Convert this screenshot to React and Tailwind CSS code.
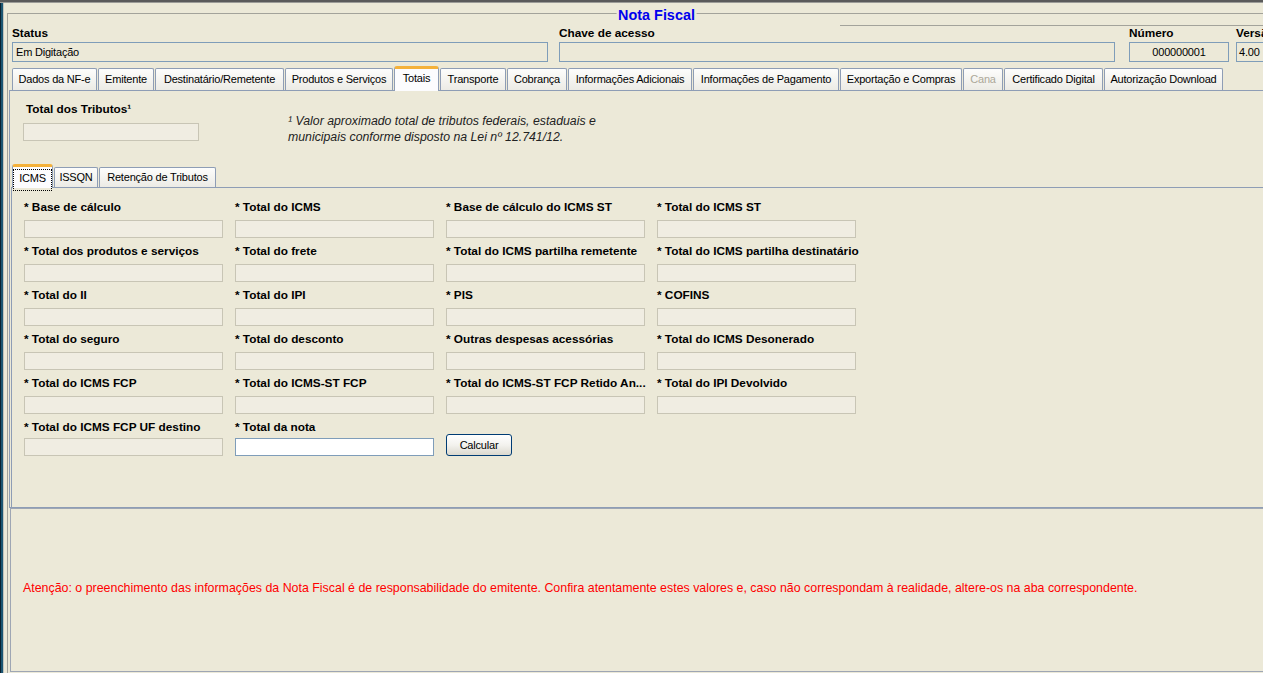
const tabs = [
  { t: "Dados da NF-e", w: "w-[85px]" },
  { t: "Emitente", w: "w-[56px]" },
  { t: "Destinatário/Remetente", w: "w-[129px]" },
  { t: "Produtos e Serviços", w: "w-[108px]" },
  { t: "Totais", w: "w-[45px]", sel: true },
  { t: "Transporte", w: "w-[66px]" },
  { t: "Cobrança", w: "w-[60px]" },
  { t: "Informações Adicionais", w: "w-[124px]" },
  { t: "Informações de Pagamento", w: "w-[146px]" },
  { t: "Exportação e Compras", w: "w-[122px]" },
  { t: "Cana", w: "w-[40px]", dis: true },
  { t: "Certificado Digital", w: "w-[99px]" },
  { t: "Autorização Download", w: "w-[119px]" },
];

const rows = [
  ["* Base de cálculo", "* Total do ICMS", "* Base de cálculo do ICMS ST", "* Total do ICMS ST"],
  ["* Total dos produtos e serviços", "* Total do frete", "* Total do ICMS partilha remetente", "* Total do ICMS partilha destinatário"],
  ["* Total do II", "* Total do IPI", "* PIS", "* COFINS"],
  ["* Total do seguro", "* Total do desconto", "* Outras despesas acessórias", "* Total do ICMS Desonerado"],
  ["* Total do ICMS FCP", "* Total do ICMS-ST FCP", "* Total do ICMS-ST FCP Retido An...", "* Total do IPI Devolvido"],
];

function Tab({ t, w, sel, dis }) {
  if (sel) {
    return (
      <div className={`${w} h-[25px] -mb-[1px] relative z-10 bg-[#fcfcfe] border-x border-t-[3px] border-x-[#8e9db5] border-t-[#f4b13a] rounded-t-[3px] flex items-center justify-center pb-[3px] text-[11px] tracking-[-0.2px] whitespace-nowrap`}>
        {t}
      </div>
    );
  }
  return (
    <div className={`${w} h-[22px] border-x border-t border-[#8e9db5] rounded-t-[2px] bg-linear-to-b from-[#fdfdfc] to-[#ecebe5] flex items-center justify-center text-[11px] tracking-[-0.2px] whitespace-nowrap ${dis ? "text-[#aca899]" : "text-black"}`}>
      {t}
    </div>
  );
}

function Label({ children }) {
  return <div className="h-[14px] leading-[14px] text-[11.8px] font-bold whitespace-nowrap">{children}</div>;
}

function DisabledInput({ last }) {
  return <div className={`${last ? "mt-[4px]" : "mt-[6px]"} h-[18px] w-[199px] border border-[#c8c5b5] bg-[#f0ede2]`} />;
}

export default function App() {
  return (
    <div className="w-[1263px] h-[673px] overflow-hidden bg-[#ece9d8] flex flex-col font-['Liberation_Sans',Arial,sans-serif] text-black">
      <div className="h-[2px] bg-[#5b5b5b] shrink-0" />
      <div className="h-[1px] bg-[#9c9c98] shrink-0" />
      <div className="flex flex-1 min-h-0">
        <div className="w-[1px] bg-[#0b2231] shrink-0" />
        <div className="w-[2px] bg-[#1c5672] shrink-0" />
        <div className="w-[1px] bg-[#c4c3bb] shrink-0" />
        <div className="ml-[3px] mt-[10px] w-[1298px] shrink-0 relative border-t border-l border-[#a3a39b] flex flex-col">
          <span className="absolute left-1/2 -translate-x-1/2 -top-[7px] bg-[#ece9d8] px-[2px] text-[14.4px] leading-[16px] font-bold text-[#0000ee]">
            Nota Fiscal
          </span>

          <div className="h-[12px] flex">
            <div className="ml-[832px] flex-1 border-b border-[#a3a39b]" />
          </div>

          {/* header fields */}
          <div className="flex pl-[4px]">
            <div className="w-[536px]">
              <Label>Status</Label>
              <div className="mt-[2px] h-[20px] border border-[#7f9db9] bg-[#ece9d8] px-[3px] flex items-center text-[11px] tracking-[-0.2px]">Em Digitação</div>
            </div>
            <div className="w-[556px] ml-[11px]">
              <Label>Chave de acesso</Label>
              <div className="mt-[2px] h-[20px] border border-[#7f9db9] bg-[#ece9d8]" />
            </div>
            <div className="w-[100px] ml-[14px]">
              <Label>Número</Label>
              <div className="mt-[2px] h-[20px] border border-[#7f9db9] bg-[#ece9d8] flex items-center justify-center text-[11px] tracking-[-0.2px]">000000001</div>
            </div>
            <div className="w-[60px] ml-[7px]">
              <Label>Versão</Label>
              <div className="mt-[2px] h-[20px] border border-[#7f9db9] bg-[#ece9d8] px-[2px] flex items-center text-[11px] tracking-[-0.2px]">4.00</div>
            </div>
          </div>

          {/* main tabs */}
          <div className="mt-[4px] h-[24px] flex items-end gap-[1px] pl-[4px]">
            {tabs.map((tb) => (
              <Tab key={tb.t} {...tb} />
            ))}
          </div>

          {/* tab panel */}
          <div className="ml-[1px] h-[418px] border-t border-l border-b border-[#8e9db5] flex flex-col">
            <div className="pt-[11px] pl-[13px] flex">
              <div className="w-[176px]">
                <div className="ml-[3px]">
                  <Label>Total dos Tributos¹</Label>
                </div>
                <div className="mt-[7px] h-[18px] w-[176px] border border-[#c8c5b5] bg-[#f0ede2]" />
              </div>
              <div className="ml-[89px] mt-[11px] text-[12.3px] leading-[16px] italic text-[#222]">
                <div>¹ Valor aproximado total de tributos federais, estaduais e</div>
                <div>municipais conforme disposto na Lei nº 12.741/12.</div>
              </div>
            </div>

            {/* sub tabs */}
            <div className="mt-[19px] ml-[2px] h-[23px] flex items-end gap-[1px]">
              <div className="w-[41px] h-[24px] -mb-[1px] relative z-10 bg-[#fcfcfe] border-x border-t-[3px] border-x-[#8e9db5] border-t-[#f4b13a] rounded-t-[3px] flex flex-col">
                <div className="flex-1 mt-[2px] mb-[1px] border border-dotted border-black flex items-center justify-center pb-[3px] text-[11px] tracking-[-0.2px]">
                  ICMS
                </div>
              </div>
              <div className="w-[44px] h-[20px] border-x border-t border-[#8e9db5] rounded-t-[2px] bg-linear-to-b from-[#fdfdfc] to-[#ecebe5] flex items-center justify-center text-[11px] tracking-[-0.2px]">
                ISSQN
              </div>
              <div className="w-[117px] h-[20px] border-x border-t border-[#8e9db5] rounded-t-[2px] bg-linear-to-b from-[#fdfdfc] to-[#ecebe5] flex items-center justify-center text-[11px] tracking-[-0.2px] whitespace-nowrap">
                Retenção de Tributos
              </div>
            </div>

            {/* sub panel */}
            <div className="ml-[1px] flex-1 border-t border-l border-[#8e9db5] pt-[12px] pl-[12px]">
              <div className="grid grid-cols-[199px_199px_199px_199px] gap-x-[12px] gap-y-[6px]">
                {rows.flat().map((l, i) => (
                  <div key={i} className="flex flex-col">
                    <Label>{l}</Label>
                    <DisabledInput />
                  </div>
                ))}
                <div className="flex flex-col">
                  <Label>* Total do ICMS FCP UF destino</Label>
                  <DisabledInput last />
                </div>
                <div className="flex flex-col">
                  <Label>* Total da nota</Label>
                  <div className="mt-[4px] h-[18px] w-[199px] border border-[#7f9db9] bg-white" />
                </div>
                <div className="flex items-end h-[36px]">
                  <button className="w-[66px] h-[22px] rounded-[3px] border border-[#003c74] bg-linear-to-b from-[#ffffff] via-[#f3f2ee] to-[#dcd9cf] text-[11px] tracking-[-0.2px] text-black flex items-center justify-center">
                    Calcular
                  </button>
                </div>
                <div />
              </div>
            </div>
          </div>

          {/* message panel */}
          <div className="ml-[2px] h-[164px] border-t border-l border-b border-[#9ea6b4] flex items-center pl-[12px] pb-[4px]">
            <span className="text-[12.4px] leading-[14px] text-[#ff0000] whitespace-nowrap">
              Atenção: o preenchimento das informações da Nota Fiscal é de responsabilidade do emitente. Confira atentamente estes valores e, caso não correspondam à realidade, altere-os na aba correspondente.
            </span>
          </div>
        </div>
      </div>
    </div>
  );
}
